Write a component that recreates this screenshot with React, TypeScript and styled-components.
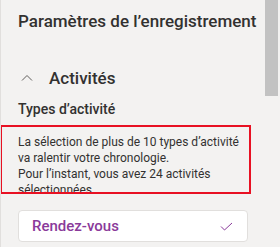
import React from "react";
import styled, { createGlobalStyle } from "styled-components";

const Global = createGlobalStyle`
  html, body { margin: 0; padding: 0; background: #f3f2f1; }
  body { font-family: Roboto, "Noto Sans", Arial, sans-serif; color: #323130; }
`;

const Frame = styled.div`
  width: 280px;
  height: 247px;
  overflow: hidden;
  display: flex;
  background: #f3f2f1;
  border-left: 1px solid #e1dfdd;
  box-sizing: border-box;
`;

const Content = styled.div`
  flex: 1;
  min-width: 0;
  padding: 8px 0 0 17px;
  position: relative;
`;

const ScrollTrack = styled.div`
  width: 15px;
  flex: none;
`;

const Thumb = styled.div`
  width: 13px;
  height: 96px;
  background: #c2c2c2;
`;

const Title = styled.h1`
  margin: 0;
  font-size: 17px;
  line-height: 26px;
  font-weight: 500;
  color: #323130;
  white-space: nowrap;
`;

const SectionHeader = styled.div`
  display: flex;
  align-items: center;
  gap: 16px;
  margin-top: 32px;
  padding-left: 3px;
  height: 24px;
`;

const SectionTitle = styled.h2`
  margin: 0;
  font-size: 17px;
  line-height: 24px;
  font-weight: 500;
  color: #323130;
`;

const FieldLabel = styled.div`
  margin-top: 9px;
  font-size: 14px;
  line-height: 20px;
  font-weight: 500;
  color: #323130;
`;

const Message = styled.div`
  position: relative;
  margin-top: 15px;
  width: 232px;
  font-size: 12px;
  line-height: 16px;
  color: #323130;
  height: 59px;
`;

const Highlight = styled.div`
  position: absolute;
  left: -18px;
  top: -9px;
  width: 251px;
  height: 69px;
  border: 2px solid #e81123;
  box-sizing: border-box;
  pointer-events: none;
`;

const Option = styled.div`
  margin-top: 17px;
  width: 230px;
  height: 32px;
  box-sizing: border-box;
  background: #ffffff;
  border: 1px solid #e1dfdd;
  border-radius: 4px;
  display: flex;
  align-items: center;
  justify-content: space-between;
  padding: 0 14px 0 13px;
`;

const OptionText = styled.span`
  font-size: 15px;
  font-weight: 500;
  color: #8a3a9a;
`;

const ChevronUp = () => (
  <svg width="12" height="8" viewBox="0 0 12 8" fill="none">
    <path d="M1 6.5 L6 1.5 L11 6.5" stroke="#605e5c" strokeWidth="1" />
  </svg>
);

const Check = () => (
  <svg width="13" height="9" viewBox="0 0 13 9" fill="none">
    <path d="M1 4.5 L4.5 8 L12 1" stroke="#8a3a9a" strokeWidth="1" />
  </svg>
);

export default function App() {
  return (
    <>
      <Global />
      <Frame>
        <Content>
          <Title>Paramètres de l’enregistrement</Title>
          <SectionHeader>
            <ChevronUp />
            <SectionTitle>Activités</SectionTitle>
          </SectionHeader>
          <FieldLabel>Types d’activité</FieldLabel>
          <Message>
            La sélection de plus de 10 types d’activité va ralentir votre chronologie.
            <br />
            Pour l’instant, vous avez 24 activités sélectionnées.
            <Highlight />
          </Message>
          <Option>
            <OptionText>Rendez-vous</OptionText>
            <Check />
          </Option>
        </Content>
        <ScrollTrack>
          <Thumb />
        </ScrollTrack>
      </Frame>
    </>
  );
}
